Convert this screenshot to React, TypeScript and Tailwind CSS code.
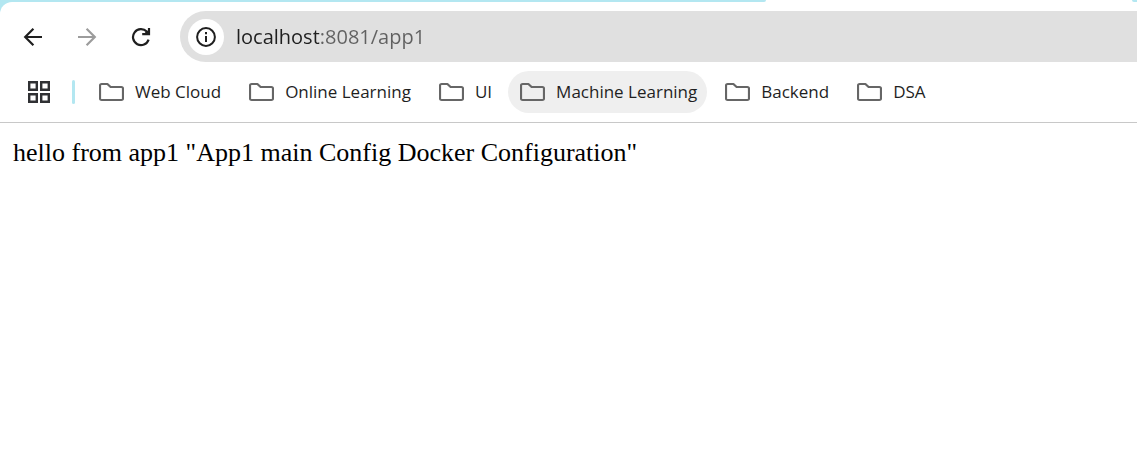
import React from "react";

const bookmarks: { name: string; active?: boolean }[] = [
  { name: "Web Cloud" },
  { name: "Online Learning" },
  { name: "UI" },
  { name: "Machine Learning", active: true },
  { name: "Backend" },
  { name: "DSA" },
];

function FolderIcon() {
  return (
    <svg className="h-5 w-[25px] shrink-0" viewBox="0 0 25 20" fill="none" aria-hidden="true">
      <path
        d="M2.600 2H8.400L11.600 5H22.400Q24 5 24 6.600V16.400Q24 18 22.400 18H2.600Q1 18 1 16.400V3.600Q1 2 2.600 2Z"
        stroke="#666666"
        strokeWidth="2.200"
        strokeLinejoin="round"
      />
    </svg>
  );
}

function ArrowIcon({ flip }: { flip?: boolean }) {
  return (
    <svg className={flip ? "size-5 rotate-180" : "size-5"} viewBox="0 0 20 20" fill="none" stroke="currentColor" strokeWidth="2.2" aria-hidden="true">
      <path d="M19 10H2.500M10.400 1.800L2.200 10L10.400 18.200" />
    </svg>
  );
}

function ReloadIcon() {
  return (
    <svg className="size-5" viewBox="0 0 20 20" fill="none" stroke="#1f1f1f" strokeWidth="2.200" aria-hidden="true">
      <path d="M17.600 12.600A8 8 0 1 1 15.800 4.600L18 7" />
      <path d="M18 1V7.200H11.200" />
      <path d="M14.500 5L18 3V7.200H13Z" fill="#1f1f1f" stroke="none" />
    </svg>
  );
}

function InfoIcon() {
  return (
    <svg className="size-5" viewBox="0 0 20 20" fill="none" aria-hidden="true">
      <circle cx="10" cy="10" r="8.900" stroke="#1f1f1f" strokeWidth="2" />
      <path d="M10 9V15M10 5V7.200" stroke="#1f1f1f" strokeWidth="2" />
    </svg>
  );
}

function AppsIcon() {
  return (
    <svg className="size-[22px]" viewBox="0 0 22 22" fill="none" stroke="#303134" strokeWidth="2.400" aria-hidden="true">
      <path d="M1.200 1.200H8.800V8.800H1.200ZM13.200 1.200H20.800V8.800H13.200ZM1.200 13.200H8.800V20.800H1.200ZM13.200 13.200H20.800V20.800H13.200Z" />
    </svg>
  );
}

export default function App() {
  return (
    <div className="min-h-screen bg-white">
      <header className="border-b border-[#c8c8c8]">
        <div className="flex h-0.5 justify-between bg-white">
          <div className="mr-[366px] flex-1 rounded-br-full bg-[#b3e7f1]" />
          <div className="w-[5px] rounded-bl-full bg-[#b3e7f1]" />
        </div>
        <div className="bg-[#b3e7f1]">
          <div className="rounded-tl-xl bg-white py-[9px]">
            <div className="flex items-center">
              <nav aria-label="History" className="flex w-[180px] shrink-0 gap-[18px] pl-[15px]">
                <button type="button" aria-label="Back" className="flex size-9 items-center justify-center text-[#1f1f1f]">
                  <ArrowIcon />
                </button>
                <button type="button" aria-label="Forward" className="flex size-9 items-center justify-center text-[#9c9c9c]">
                  <ArrowIcon flip />
                </button>
                <button type="button" aria-label="Reload" className="flex size-9 items-center justify-center">
                  <ReloadIcon />
                </button>
              </nav>
              <div className="flex h-[51px] flex-1 items-center gap-3 rounded-l-full bg-[#e0e0e0] pl-2">
                <button type="button" aria-label="Site information" className="flex size-9 shrink-0 items-center justify-center rounded-full bg-white">
                  <InfoIcon />
                </button>
                <input
                  type="text"
                  aria-label="Address"
                  defaultValue="localhost:8081/app1"
                  className="h-9 min-w-0 flex-1 bg-[linear-gradient(to_right,#1f1f1f_83px,#606060_83px)] bg-clip-text font-['Open_Sans',sans-serif] text-[20px] text-transparent caret-black outline-none"
                />
              </div>
            </div>
            <div className="mt-[9px] flex items-center pl-7">
              <button type="button" aria-label="Apps">
                <AppsIcon />
              </button>
              <div className="ml-[22px] h-6 w-[3px] rounded-full bg-[#b3e7f1]" />
              <nav aria-label="Bookmarks" className="ml-3 flex gap-1.5">
                {bookmarks.map((b) => (
                  <button
                    type="button"
                    key={b.name}
                    className={
                      b.active
                        ? "flex h-[42px] items-center gap-[11px] rounded-full bg-[#efefef] pr-2.5 pl-3"
                        : "flex h-[42px] items-center gap-[11px] rounded-full pr-2.5 pl-3"
                    }
                  >
                    <FolderIcon />
                    <span className="font-['Open_Sans',sans-serif] text-[17px] whitespace-nowrap text-[#1f1f1f]">{b.name}</span>
                  </button>
                ))}
              </nav>
            </div>
          </div>
        </div>
      </header>
      <main className="px-[13px] py-3.5">
        <p className="font-['Liberation_Serif',serif] text-[26px] leading-8 text-black">
          hello from app1 "App1 main Config Docker Configuration"
        </p>
      </main>
    </div>
  );
}
